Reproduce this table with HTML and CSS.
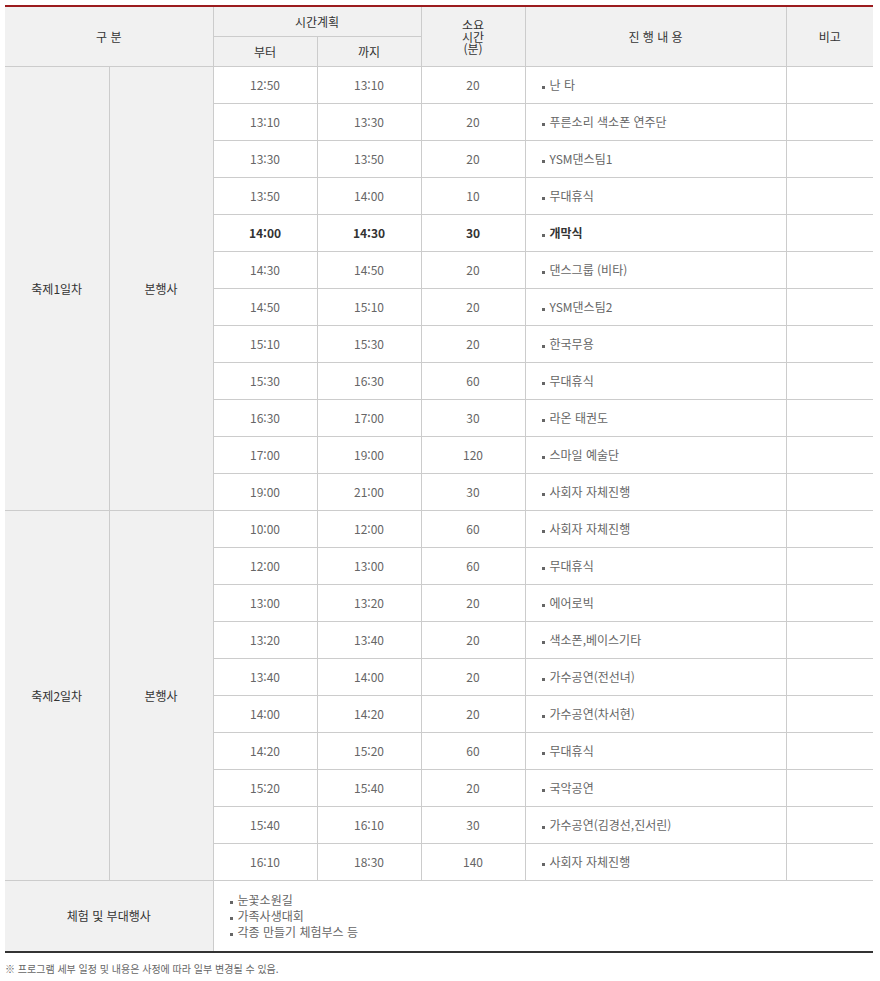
FILE: index.html
```html
<!DOCTYPE html>
<html lang="ko">
<head>
<meta charset="utf-8">
<title>축제 일정</title>
<link rel="stylesheet" href="styles.css">
</head>
<body>
<div class="wrap">
<table class="sched">
  <colgroup>
    <col class="c104"><col class="c104"><col class="c104"><col class="c104"><col class="c104"><col class="c261"><col class="c87">
  </colgroup>
  <thead>
    <tr>
      <th colspan="2" rowspan="2">구 분</th>
      <th colspan="2">시간계획</th>
      <th rowspan="2" class="tight">소요<br>시간<br>(분)</th>
      <th rowspan="2">진 행 내 용</th>
      <th rowspan="2">비고</th>
    </tr>
    <tr>
      <th>부터</th>
      <th>까지</th>
    </tr>
  </thead>
  <tbody>
    <tr><th rowspan="12" class="side">축제1일차</th><th rowspan="12" class="side">본행사</th><td>12:50</td><td>13:10</td><td>20</td><td class="item"><span class="b">난 타</span></td><td></td></tr>
    <tr><td>13:10</td><td>13:30</td><td>20</td><td class="item"><span class="b">푸른소리 색소폰 연주단</span></td><td></td></tr>
    <tr><td>13:30</td><td>13:50</td><td>20</td><td class="item"><span class="b">YSM댄스팀1</span></td><td></td></tr>
    <tr><td>13:50</td><td>14:00</td><td>10</td><td class="item"><span class="b">무대휴식</span></td><td></td></tr>
    <tr class="strong"><td>14:00</td><td>14:30</td><td>30</td><td class="item"><span class="b">개막식</span></td><td></td></tr>
    <tr><td>14:30</td><td>14:50</td><td>20</td><td class="item"><span class="b">댄스그룹 (비타)</span></td><td></td></tr>
    <tr><td>14:50</td><td>15:10</td><td>20</td><td class="item"><span class="b">YSM댄스팀2</span></td><td></td></tr>
    <tr><td>15:10</td><td>15:30</td><td>20</td><td class="item"><span class="b">한국무용</span></td><td></td></tr>
    <tr><td>15:30</td><td>16:30</td><td>60</td><td class="item"><span class="b">무대휴식</span></td><td></td></tr>
    <tr><td>16:30</td><td>17:00</td><td>30</td><td class="item"><span class="b">라온 태권도</span></td><td></td></tr>
    <tr><td>17:00</td><td>19:00</td><td>120</td><td class="item"><span class="b">스마일 예술단</span></td><td></td></tr>
    <tr><td>19:00</td><td>21:00</td><td>30</td><td class="item"><span class="b">사회자 자체진행</span></td><td></td></tr>
    <tr><th rowspan="10" class="side">축제2일차</th><th rowspan="10" class="side">본행사</th><td>10:00</td><td>12:00</td><td>60</td><td class="item"><span class="b">사회자 자체진행</span></td><td></td></tr>
    <tr><td>12:00</td><td>13:00</td><td>60</td><td class="item"><span class="b">무대휴식</span></td><td></td></tr>
    <tr><td>13:00</td><td>13:20</td><td>20</td><td class="item"><span class="b">에어로빅</span></td><td></td></tr>
    <tr><td>13:20</td><td>13:40</td><td>20</td><td class="item"><span class="b">색소폰,베이스기타</span></td><td></td></tr>
    <tr><td>13:40</td><td>14:00</td><td>20</td><td class="item"><span class="b">가수공연(전선녀)</span></td><td></td></tr>
    <tr><td>14:00</td><td>14:20</td><td>20</td><td class="item"><span class="b">가수공연(차서현)</span></td><td></td></tr>
    <tr><td>14:20</td><td>15:20</td><td>60</td><td class="item"><span class="b">무대휴식</span></td><td></td></tr>
    <tr><td>15:20</td><td>15:40</td><td>20</td><td class="item"><span class="b">국악공연</span></td><td></td></tr>
    <tr><td>15:40</td><td>16:10</td><td>30</td><td class="item"><span class="b">가수공연(김경선,진서린)</span></td><td></td></tr>
    <tr><td>16:10</td><td>18:30</td><td>140</td><td class="item"><span class="b">사회자 자체진행</span></td><td></td></tr>
    <tr class="extra">
      <th colspan="2" class="side">체험 및 부대행사</th>
      <td colspan="5" class="list">
        <ul>
          <li><span class="b">눈꽃소원길</span></li>
          <li><span class="b">가족사생대회</span></li>
          <li><span class="b">각종 만들기 체험부스 등</span></li>
        </ul>
      </td>
    </tr>
  </tbody>
</table>
<p class="note">※ 프로그램 세부 일정 및 내용은 사정에 따라 일부 변경될 수 있음.</p>
</div>
</body>
</html>
```
FILE: styles.css
```css
html, body {
  margin: 0;
  padding: 0;
  background: #fff;
}
body {
  font-family: "Noto Sans CJK KR", "Noto Sans", sans-serif;
  font-size: 12px;
  color: #666;
}
.wrap {
  padding: 5px 7px 0 5px;
}
.sched {
  width: 868px;
  border-collapse: collapse;
  table-layout: fixed;
  border-top: 2px solid #9b1b1e;
  border-bottom: 2px solid #333;
}
.c104 { width: 104px; }
.c261 { width: 261px; }
.c87 { width: 87px; }
.sched th, .sched td {
  border: 1px solid #ccc;
  padding: 0;
  text-align: center;
  vertical-align: middle;
  line-height: 16px;
}
.sched tr > :first-child { border-left: none; }
.sched tr > :last-child { border-right: none; }
.sched thead th {
  background: #f1f1f1;
  color: #333;
  font-weight: normal;
  height: 29px;
}
.sched thead th.tight {
  line-height: 12px;
  font-size: 12px;
}
.sched tbody th.side {
  background: #f1f1f1;
  color: #333;
  font-weight: normal;
}
.sched tbody td {
  height: 36px;
}
.sched td.item {
  text-align: left;
  padding-left: 16px;
}
.b::before {
  content: "";
  display: inline-block;
  width: 3px;
  height: 3px;
  background: #666;
  margin-right: 5px;
  vertical-align: middle;
  position: relative;
  top: 1px;
}
.sched tr.strong td {
  font-weight: bold;
  color: #333;
}
.sched tr.extra th, .sched tr.extra td {
  height: 70px;
}
.sched tr.extra td.list {
  text-align: left;
  padding-left: 16px;
  border-right: none;
}
.list ul {
  margin: 0;
  padding: 0;
  list-style: none;
}
.list li {
  line-height: 16px;
}
.note {
  margin: 9px 0 0 0;
  font-size: 10px;
  color: #666;
  line-height: 14px;
}
```
